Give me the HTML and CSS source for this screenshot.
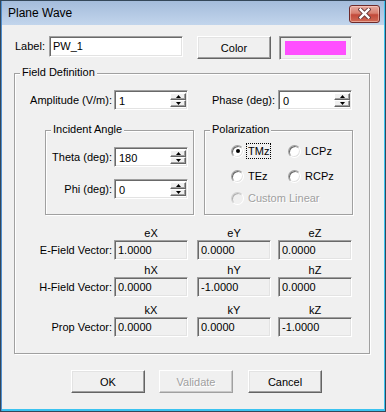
FILE: index.html
```html
<!DOCTYPE html>
<html>
<head>
<meta charset="utf-8">
<link rel="stylesheet" href="styles.css">
</head>
<body>
<div class="window">
  <div class="titlebar">
    <span class="title">Plane Wave</span>
    <div class="close">
      <svg width="13" height="11" viewBox="0 0 13 11">
        <path d="M2.5 1.5 L10.5 9.5 M10.5 1.5 L2.5 9.5" stroke="#6a3a3a" stroke-width="4.2" stroke-linecap="square"/>
        <path d="M2.5 1.5 L10.5 9.5 M10.5 1.5 L2.5 9.5" stroke="#ffffff" stroke-width="2.4" stroke-linecap="square"/>
      </svg>
    </div>
  </div>
  <div class="content">
    <div class="top-row">
      <span class="lbl lbl-label">Label:</span>
      <div class="sunken text-field">PW_1</div>
      <div class="btn color-btn">Color</div>
      <div class="sunken swatch"><div class="swatch-fill"></div></div>
    </div>

    <div class="group fd">
      <span class="caption">Field Definition</span>
      <div class="amp-row">
        <span class="lbl lbl-amp">Amplitude (V/m):</span>
        <div class="sunken spin">
          <span class="spin-text">1</span>
          <div class="spin-btns">
            <div class="spin-btn"><svg width="5" height="3" viewBox="0 0 5 3"><polygon points="0,3 5,3 2.5,0" fill="#000"/></svg></div>
            <div class="spin-btn"><svg width="5" height="3" viewBox="0 0 5 3"><polygon points="0,0 5,0 2.5,3" fill="#000"/></svg></div>
          </div>
        </div>
        <span class="lbl lbl-phase">Phase (deg):</span>
        <div class="sunken spin">
          <span class="spin-text">0</span>
          <div class="spin-btns">
            <div class="spin-btn"><svg width="5" height="3" viewBox="0 0 5 3"><polygon points="0,3 5,3 2.5,0" fill="#000"/></svg></div>
            <div class="spin-btn"><svg width="5" height="3" viewBox="0 0 5 3"><polygon points="0,0 5,0 2.5,3" fill="#000"/></svg></div>
          </div>
        </div>
      </div>

      <div class="groups-row">
        <div class="group inc">
          <span class="caption">Incident Angle</span>
          <div class="inc-row theta-row">
            <span class="lbl lbl-inc">Theta (deg):</span>
            <div class="sunken spin">
              <span class="spin-text">180</span>
              <div class="spin-btns">
                <div class="spin-btn"><svg width="5" height="3" viewBox="0 0 5 3"><polygon points="0,3 5,3 2.5,0" fill="#000"/></svg></div>
                <div class="spin-btn"><svg width="5" height="3" viewBox="0 0 5 3"><polygon points="0,0 5,0 2.5,3" fill="#000"/></svg></div>
              </div>
            </div>
          </div>
          <div class="inc-row phi-row">
            <span class="lbl lbl-inc">Phi (deg):</span>
            <div class="sunken spin">
              <span class="spin-text">0</span>
              <div class="spin-btns">
                <div class="spin-btn"><svg width="5" height="3" viewBox="0 0 5 3"><polygon points="0,3 5,3 2.5,0" fill="#000"/></svg></div>
                <div class="spin-btn"><svg width="5" height="3" viewBox="0 0 5 3"><polygon points="0,0 5,0 2.5,3" fill="#000"/></svg></div>
              </div>
            </div>
          </div>
        </div>

        <div class="group pol">
          <span class="caption">Polarization</span>
          <div class="radio-row r1">
            <div class="radio-item col1"><span class="radio checked"></span><span class="rtext focus">TMz</span></div>
            <div class="radio-item"><span class="radio"></span><span class="rtext">LCPz</span></div>
          </div>
          <div class="radio-row r2">
            <div class="radio-item col1"><span class="radio"></span><span class="rtext">TEz</span></div>
            <div class="radio-item"><span class="radio"></span><span class="rtext">RCPz</span></div>
          </div>
          <div class="radio-row r3">
            <div class="radio-item"><span class="radio disabled"></span><span class="rtext disabled-text">Custom Linear</span></div>
          </div>
        </div>
      </div>

      <div class="vectors">
        <div class="vhead">
          <span class="vlbl"></span><span class="vcell">eX</span><span class="vcell c2">eY</span><span class="vcell c3">eZ</span>
        </div>
        <div class="vrow">
          <span class="vlbl">E-Field Vector:</span>
          <div class="sunken ro vcell">1.0000</div>
          <div class="sunken ro vcell c2">0.0000</div>
          <div class="sunken ro vcell c3">0.0000</div>
        </div>
        <div class="vhead h2">
          <span class="vlbl"></span><span class="vcell">hX</span><span class="vcell c2">hY</span><span class="vcell c3">hZ</span>
        </div>
        <div class="vrow">
          <span class="vlbl">H-Field Vector:</span>
          <div class="sunken ro vcell">0.0000</div>
          <div class="sunken ro vcell c2">-1.0000</div>
          <div class="sunken ro vcell c3">0.0000</div>
        </div>
        <div class="vhead h3">
          <span class="vlbl"></span><span class="vcell">kX</span><span class="vcell c2">kY</span><span class="vcell c3">kZ</span>
        </div>
        <div class="vrow">
          <span class="vlbl">Prop Vector:</span>
          <div class="sunken ro vcell">0.0000</div>
          <div class="sunken ro vcell c2">0.0000</div>
          <div class="sunken ro vcell c3">-1.0000</div>
        </div>
      </div>
    </div>

    <div class="buttons">
      <div class="btn dlg-btn">OK</div>
      <div class="btn dlg-btn validate disabled-text">Validate</div>
      <div class="btn dlg-btn cancel">Cancel</div>
    </div>
  </div>
</div>
</body>
</html>
```

FILE: styles.css
```css
* { box-sizing: border-box; }
html, body { margin: 0; padding: 0; }
body {
  width: 386px;
  height: 412px;
  overflow: hidden;
  background: #f0f0f0;
  font-family: "Liberation Sans", Arial, sans-serif;
  font-size: 11px;
  color: #000;
}
.window {
  width: 386px;
  height: 412px;
  border: 1px solid #344759;
  padding: 0 1px 2px 1px;
  background: #f0f0f0;
  box-shadow: inset 1px 0 0 #4f8fd0, inset -1px 0 0 #3bc3f0, inset 0 -2px 0 #3bc3f0;
  display: flex;
  flex-direction: column;
}
.titlebar {
  height: 24px;
  flex: none;
  background: linear-gradient(#a4bcdb, #c2d5ec);
  display: flex;
  align-items: center;
  justify-content: space-between;
  padding: 0 4px 0 6px;
}
.title {
  font-size: 12px;
  color: #000;
  line-height: 14px;
}
.close {
  width: 31px;
  height: 18px;
  margin-top: 1px;
  border: 1px solid #6e2a2a;
  border-radius: 3px;
  background: linear-gradient(#e7aaa0 0%, #d88070 45%, #c24a3a 55%, #d06a55 100%);
  box-shadow: inset 0 0 0 1px rgba(255,220,210,0.5);
  display: flex;
  align-items: center;
  justify-content: center;
}
.close svg { display: block; }

.content {
  flex: 1;
  background: #f0f0f0;
  position: relative;
}

/* shared */
.sunken {
  border: 1px solid;
  border-color: #a0a0a0 #ffffff #ffffff #a0a0a0;
  box-shadow: inset 1px 1px 0 #696969, inset -1px -1px 0 #e3e3e3;
  background: #fff;
}
.btn {
  border: 1px solid;
  border-color: #ffffff #646464 #646464 #ffffff;
  box-shadow: inset -1px -1px 0 #a0a0a0, inset 1px 1px 0 #e3e3e3;
  background: #f0f0f0;
  display: flex;
  align-items: center;
  justify-content: center;
}
.lbl { white-space: nowrap; }
.disabled-text { color: #a0a0a0; text-shadow: 1px 1px 0 #ffffff; }

.group {
  position: relative;
  border: 1px solid #a0a0a0;
  box-shadow: 1px 1px 0 #ffffff, inset 1px 1px 0 #ffffff;
}
.caption {
  position: absolute;
  left: 5px;
  top: -8px;
  line-height: 13px;
  padding: 0 2px;
  background: #f0f0f0;
  white-space: nowrap;
}

/* top row */
.top-row {
  display: flex;
  align-items: flex-start;
  margin-top: 11px;
  margin-left: 13px;
  height: 24px;
}
.lbl-label {
  width: 34px;
  line-height: 21px;
}
.text-field {
  width: 134px;
  height: 21px;
  padding-left: 3px;
  line-height: 19px;
}
.color-btn {
  margin-left: 14px;
  width: 74px;
  height: 23px;
}
.swatch {
  margin-left: 8px;
  width: 73px;
  height: 24px;
  background: #f0f0f0;
  padding: 4px 5px;
}
.swatch-fill {
  width: 100%;
  height: 100%;
  background: #ff4fff;
}

/* field definition */
.fd {
  margin-top: 13px;
  margin-left: 12px;
  width: 356px;
  height: 281px;
}
.amp-row {
  display: flex;
  margin-top: 16px;
  height: 20px;
  align-items: center;
}
.lbl-amp {
  width: 99px;
  text-align: right;
  padding-right: 2px;
}
.lbl-phase {
  width: 90px;
  text-align: right;
  padding-right: 3px;
}
.spin {
  width: 74px;
  height: 20px;
  display: flex;
  padding: 2px 1px 2px 2px;
}
.spin-text {
  flex: 1;
  padding-left: 2px;
  line-height: 16px;
}
.spin-btns {
  width: 16px;
  display: flex;
  flex-direction: column;
}
.spin-btn {
  flex: 1;
  border: 1px solid;
  border-color: #ffffff #646464 #646464 #ffffff;
  box-shadow: inset -1px -1px 0 #a0a0a0;
  background: #f0f0f0;
  display: flex;
  align-items: center;
  justify-content: center;
}
.spin-btn svg { display: block; }

.groups-row {
  display: flex;
  margin-top: 20px;
}
.inc {
  margin-left: 30px;
  width: 149px;
  height: 85px;
}
.inc-row {
  display: flex;
  align-items: center;
  height: 20px;
}
.theta-row { margin-top: 16px; }
.phi-row { margin-top: 12px; }
.lbl-inc {
  width: 68px;
  text-align: right;
  padding-right: 2px;
}
.pol {
  margin-left: 10px;
  width: 149px;
  height: 85px;
  padding-left: 26px;
}
.radio-row {
  display: flex;
  height: 16px;
  align-items: center;
}
.r1 { margin-top: 12px; }
.r2 { margin-top: 9px; }
.r3 { margin-top: 6px; }
.radio-item {
  display: flex;
  align-items: center;
}
.col1 { width: 57px; }
.radio {
  position: relative;
  width: 13px;
  height: 13px;
  border-radius: 50%;
  border: 1px solid;
  border-color: #a0a0a0 #ffffff #ffffff #a0a0a0;
  box-shadow: inset 1px 1px 0 #696969, inset -1px -1px 0 #e3e3e3;
  background: #ffffff;
}
.radio.checked::after {
  content: "";
  position: absolute;
  left: 3.5px;
  top: 3.5px;
  width: 4px;
  height: 4px;
  border-radius: 50%;
  background: #000;
}
.radio.disabled { background: #f0f0f0; border-color: #d0d0d0 #fff #fff #d0d0d0; box-shadow: inset 1px 1px 0 #b0b0b0; }
.rtext {
  margin-left: 2px;
  border: 1px dotted transparent;
  padding: 0 1px;
  line-height: 14px;
  white-space: nowrap;
}
.rtext.focus { border-color: #000; }

/* vectors */
.vectors { margin-top: 12px; }
.vhead, .vrow { display: flex; }
.vhead { height: 13px; line-height: 13px; }
.h2 { margin-top: 4px; }
.h3 { margin-top: 7px; }
.vlbl {
  width: 99px;
  text-align: right;
  padding-right: 2px;
  line-height: 20px;
  white-space: nowrap;
}
.vcell {
  width: 74px;
  flex: none;
  text-align: center;
}
.vcell.c2 { margin-left: 9px; }
.vcell.c3 { margin-left: 7px; }
.ro {
  height: 20px;
  background: #f0f0f0;
  text-align: left;
  padding-left: 3px;
  line-height: 18px;
}

/* dialog buttons */
.buttons {
  display: flex;
  margin-top: 16px;
  margin-left: 69px;
}
.dlg-btn {
  width: 74px;
  height: 23px;
}
.validate { margin-left: 14px; border-color: #fff #a0a0a0 #a0a0a0 #fff; box-shadow: inset -1px -1px 0 #c8c8c8; }
.cancel { margin-left: 15px; }
```
